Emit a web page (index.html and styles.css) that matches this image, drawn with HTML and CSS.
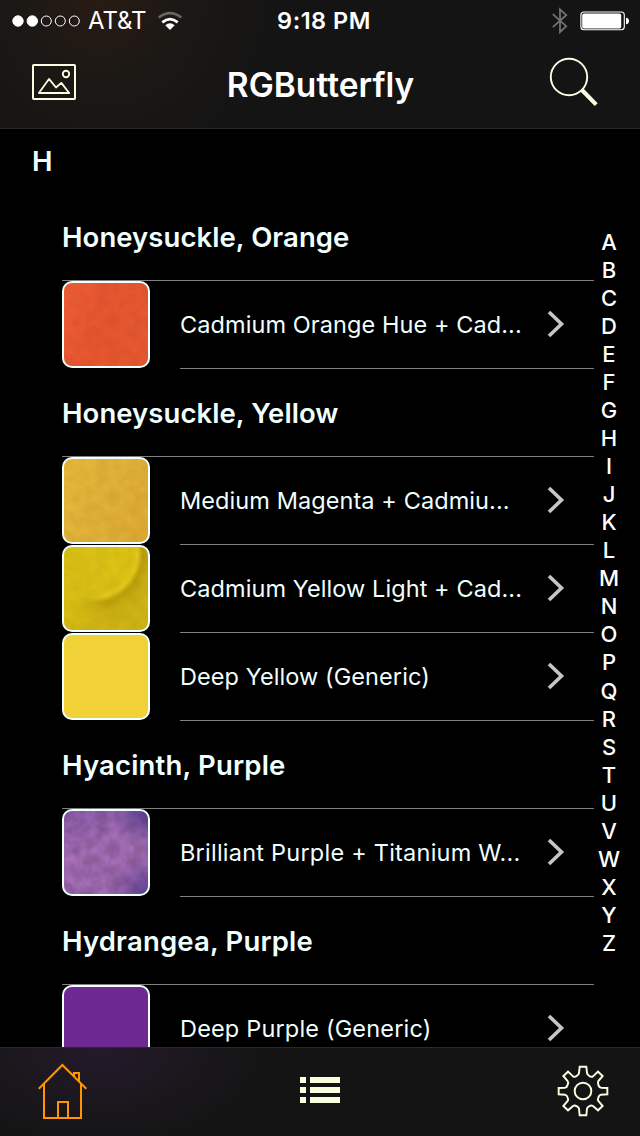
FILE: index.html
```html
<!DOCTYPE html>
<html lang="en">
<head>
<meta charset="utf-8">
<title>RGButterfly</title>
<link rel="stylesheet" href="styles.css">
</head>
<body>
<svg class="defs" width="0" height="0" aria-hidden="true">
  <defs>
    <filter id="grain" x="0" y="0" width="100%" height="100%">
      <feTurbulence type="fractalNoise" baseFrequency="0.09" numOctaves="3" seed="4"/>
      <feColorMatrix values="0 0 0 0 0  0 0 0 0 0  0 0 0 0 0  1 0 0 0 -0.2"/>
    </filter>
    <symbol id="chevron" viewBox="0 0 18 28"><path d="M2 2 L14.5 14 L2 26" fill="none" stroke="#c6c6c8" stroke-width="3.6"/></symbol>
  </defs>
</svg>
<div class="screen">
  <header class="top">
    <div class="status">
      <div class="carrier">
        <svg width="68" height="14" viewBox="0 0 68 14"><g stroke="#fff" stroke-width="1"><circle cx="6" cy="7" r="5.2" fill="#fff"/><circle cx="20.3" cy="7" r="5.2" fill="#fff"/><g fill="none"><circle cx="34.3" cy="7" r="5"/><circle cx="48.3" cy="7" r="5"/><circle cx="62.3" cy="7" r="5"/></g></g></svg>
        <span class="network">AT&amp;T</span>
        <svg class="wifi" width="26" height="20" viewBox="0 0 26 20"><g fill="none" stroke-width="2.7"><path d="M1.7 6.5 Q13 -2.3 24.3 6.5" stroke="#666"/><path d="M5.3 11.4 Q13 5 20.7 11.4" stroke="#fff"/></g><path d="M8.3 14.3 Q13 10.2 17.7 14.3 L13 19Z" fill="#fff"/></svg>
      </div>
      <span class="time">9:18 PM</span>
      <div class="power">
        <svg width="16" height="28" viewBox="0 0 16 28"><path d="M.8 7.2 L14.2 19.2 L8 25.2 V2.4 L14.2 8.2 L.8 20.2" fill="none" stroke="#727272" stroke-width="1.8"/></svg>
        <svg width="50" height="20" viewBox="0 0 50 20"><rect x=".9" y="1" width="43.4" height="17.8" rx="3" fill="none" stroke="#fff" stroke-width="1.1"/><rect x="2.2" y="2.4" width="39" height="15" rx="1.6" fill="#fff"/><path d="M46 6.7 Q49 7 49 10 Q49 13 46 13.3Z" fill="#fff"/></svg>
      </div>
    </div>
    <nav class="navbar">
      <svg width="44" height="36" viewBox="0 0 44 36" fill="none" stroke="#f7ffe0" stroke-width="2"><rect x="1" y="1" width="42" height="34" rx=".7"/><path d="M6.9 29 L17 14.9 L24 23.5 L29.3 18.9 L37.2 29Z" stroke-width="1.8" stroke-linejoin="round"/><circle cx="34" cy="10" r="3.2" stroke-width="1.9"/></svg>
      <h1 class="title">RGButterfly</h1>
      <svg width="50" height="50" viewBox="0 0 50 50" fill="none" stroke="#f7ffe0"><circle cx="20" cy="20" r="18.2" stroke-width="1.9"/><path d="M32.7 32.8 L47.2 47.6" stroke-width="4.2"/></svg>
    </nav>
  </header>

  <main class="content">
    <div class="list">
      <h2 class="letter">H</h2>
      <h3 class="group">Honeysuckle, Orange</h3>
      <div class="row"><div class="swatch orange"><svg width="84" height="83"><rect width="84" height="83" filter="url(#grain)" opacity=".09"/></svg></div><div class="cell"><span>Cadmium Orange Hue + Cad...</span><svg width="18" height="28"><use href="#chevron"/></svg></div></div>
      <h3 class="group">Honeysuckle, Yellow</h3>
      <div class="row"><div class="swatch amber"><svg width="84" height="83"><rect width="84" height="83" filter="url(#grain)" opacity=".09"/></svg></div><div class="cell"><span>Medium Magenta + Cadmiu...</span><svg width="18" height="28"><use href="#chevron"/></svg></div></div>
      <div class="row"><div class="swatch lemon"><svg width="84" height="83"><rect width="84" height="83" filter="url(#grain)" opacity=".07"/></svg></div><div class="cell"><span>Cadmium Yellow Light + Cad...</span><svg width="18" height="28"><use href="#chevron"/></svg></div></div>
      <div class="row"><div class="swatch yellow"></div><div class="cell"><span>Deep Yellow (Generic)</span><svg width="18" height="28"><use href="#chevron"/></svg></div></div>
      <h3 class="group purple-group">Hyacinth, Purple</h3>
      <div class="row"><div class="swatch violet"><svg width="84" height="83"><rect width="84" height="83" filter="url(#grain)" opacity=".3"/></svg></div><div class="cell"><span class="wide">Brilliant Purple + Titanium W...</span><svg width="18" height="28"><use href="#chevron"/></svg></div></div>
      <h3 class="group purple-group">Hydrangea, Purple</h3>
      <div class="row"><div class="swatch purple"></div><div class="cell"><span class="medium">Deep Purple (Generic)</span><svg width="18" height="28"><use href="#chevron"/></svg></div></div>
    </div>
    <div class="index">
      <span>A</span><span>B</span><span>C</span><span>D</span><span>E</span><span>F</span><span>G</span><span>H</span><span>I</span><span>J</span><span>K</span><span>L</span><span>M</span><span>N</span><span>O</span><span>P</span><span>Q</span><span>R</span><span>S</span><span>T</span><span>U</span><span>V</span><span>W</span><span>X</span><span>Y</span><span>Z</span>
    </div>
  </main>

  <footer class="tabs">
    <svg width="50" height="56" viewBox="0 0 50 56" fill="none" stroke="#ff9500" stroke-width="2"><path d="M.8 25.7 L24.4 2 L48.3 25.7"/><path d="M6 21 V55 H43 V21"/><path d="M20 55 V39 H30 V55"/><path d="M36 13.8 V10 H41 V18.5"/></svg>
    <svg class="list-icon" width="40" height="26" viewBox="0 0 40 26" fill="#f7ffe0"><path d="M0 0h6v6H0zM0 10h6v6H0zM0 20h6v6H0zM10 0h30v6H10zM10 10h30v6H10zM10 20h30v6H10z"/></svg>
    <svg width="52" height="52" viewBox="51 75 156 156" fill="none" stroke="#f7ffe0" stroke-width="5.8"><path d="M119 80H139L141 99Q142 105 147 107Q154 112 159 109L174 95L188 108L175 123Q173 127 175 134Q177 142 183 143L202 144V163L183 164Q177 165 175 173Q172 179 175 183L188 198L174 211L159 198Q154 195 147 199Q142 201 141 206L139 226H119L117 206Q116 201 111 199Q104 195 99 198L84 211L70 198L83 183Q86 179 83 173Q81 165 75 164L56 163V144L75 143Q81 142 83 134Q86 127 83 123L70 108L84 95L99 109Q104 112 111 107Q116 105 117 99Z"/><circle cx="129" cy="153" r="25"/></svg>
  </footer>
</div>
</body>
</html>
```
FILE: styles.css
```css
* { box-sizing: border-box; }
body { margin: 0; background: #000; font-family: Inter, "Liberation Sans", sans-serif; }
svg { display: block; flex: none; }
.defs { position: absolute; }
h1, h2, h3 { margin: 0; font-weight: 600; white-space: nowrap; }

.screen { width: 640px; height: 1136px; display: flex; flex-direction: column; overflow: hidden; background: #000; }

.top { flex: none; height: 129px; border-bottom: 1px solid #29292a; background: radial-gradient(circle at 100px 0, #291b14 0, #1c1814 75px, #141414 180px); color: #fff; }
.status { height: 40px; display: grid; grid-template-columns: 1fr auto 1fr; align-items: center; padding: 1px 10px 0 12px; }
.carrier { display: flex; align-items: center; font-size: 24px; }
.network { margin-left: 8px; width: 59px; letter-spacing: -0.1px; }
.wifi { margin-left: 10px; }
.time { font-size: 23.5px; font-weight: 600; letter-spacing: 0.5px; margin-left: 6px; }
.power { display: flex; align-items: center; justify-content: flex-end; gap: 12px; }
.navbar { height: 88px; display: flex; align-items: center; justify-content: space-between; padding: 0 41px 4px 32px; }
.title { font-size: 33.5px; line-height: 44px; padding-top: 5px; margin-left: 16px; }

.content { flex: 1; min-height: 0; display: flex; overflow: hidden; }
.list { width: 594px; flex: none; color: #f0ffff; }
.letter { height: 64px; line-height: 64px; padding-left: 32px; font-size: 27.5px; }
.group { height: 88px; line-height: 88px; margin-left: 62px; border-bottom: 1px solid #808080; font-size: 27.5px; letter-spacing: 0.07px; }
.purple-group { letter-spacing: 0.18px; }
.row { height: 88px; display: flex; padding-left: 62px; gap: 30px; }
.swatch { width: 88px; height: 87px; flex: none; border: 2px solid #f0ffff; border-radius: 10px; overflow: hidden; }
.cell { flex: 1; display: flex; align-items: center; justify-content: space-between; padding-right: 29px; border-bottom: 1px solid #808080; font-size: 23.5px; letter-spacing: 0.08px; white-space: nowrap; }
.cell svg { margin-bottom: 2px; }
.cell .wide { letter-spacing: 0.23px; }
.cell .medium { letter-spacing: 0.17px; }

.orange { background: linear-gradient(110deg, #f05e37, #e8572f 45%, #e85a32); }
.amber { background: linear-gradient(120deg, #e8b93b, #e3b338 50%, #e0ab32); }
.lemon { background: radial-gradient(ellipse 46px 62px at 0 38px, #d9bf15 35%, transparent), radial-gradient(ellipse 46px 46px at 30px 7px, #dec416 0, #dcc214 80%, #e4ca1c 94%, #bc9f0c 106%, #ccb012 125%, #d0b515 160%); }
.yellow { background: #f1d236; }
.violet { background: radial-gradient(circle at 100% 0, #5e4299, transparent 30%), radial-gradient(circle at 100% 100%, #6b48a3, transparent 32%), linear-gradient(160deg, #915fb0, #a971ba 45%, #a36ab6); }
.purple { background: #6d2891; }

.index { width: 30px; padding-top: 99px; display: flex; flex-direction: column; color: #fff; font-size: 22px; font-weight: 500; text-align: center; }
.index span { height: 28.04px; line-height: 28px; flex: none; }

.tabs { flex: none; height: 89px; display: flex; align-items: center; justify-content: space-between; padding: 0 31px 2px 38px; border-top: 1px solid #29292b; background: radial-gradient(ellipse 170px 100px at 100px 0, #241a2b 0, #1a171c 60%, #141414 100%); }
.list-icon { margin: 0 6px 2px 0; }
```
